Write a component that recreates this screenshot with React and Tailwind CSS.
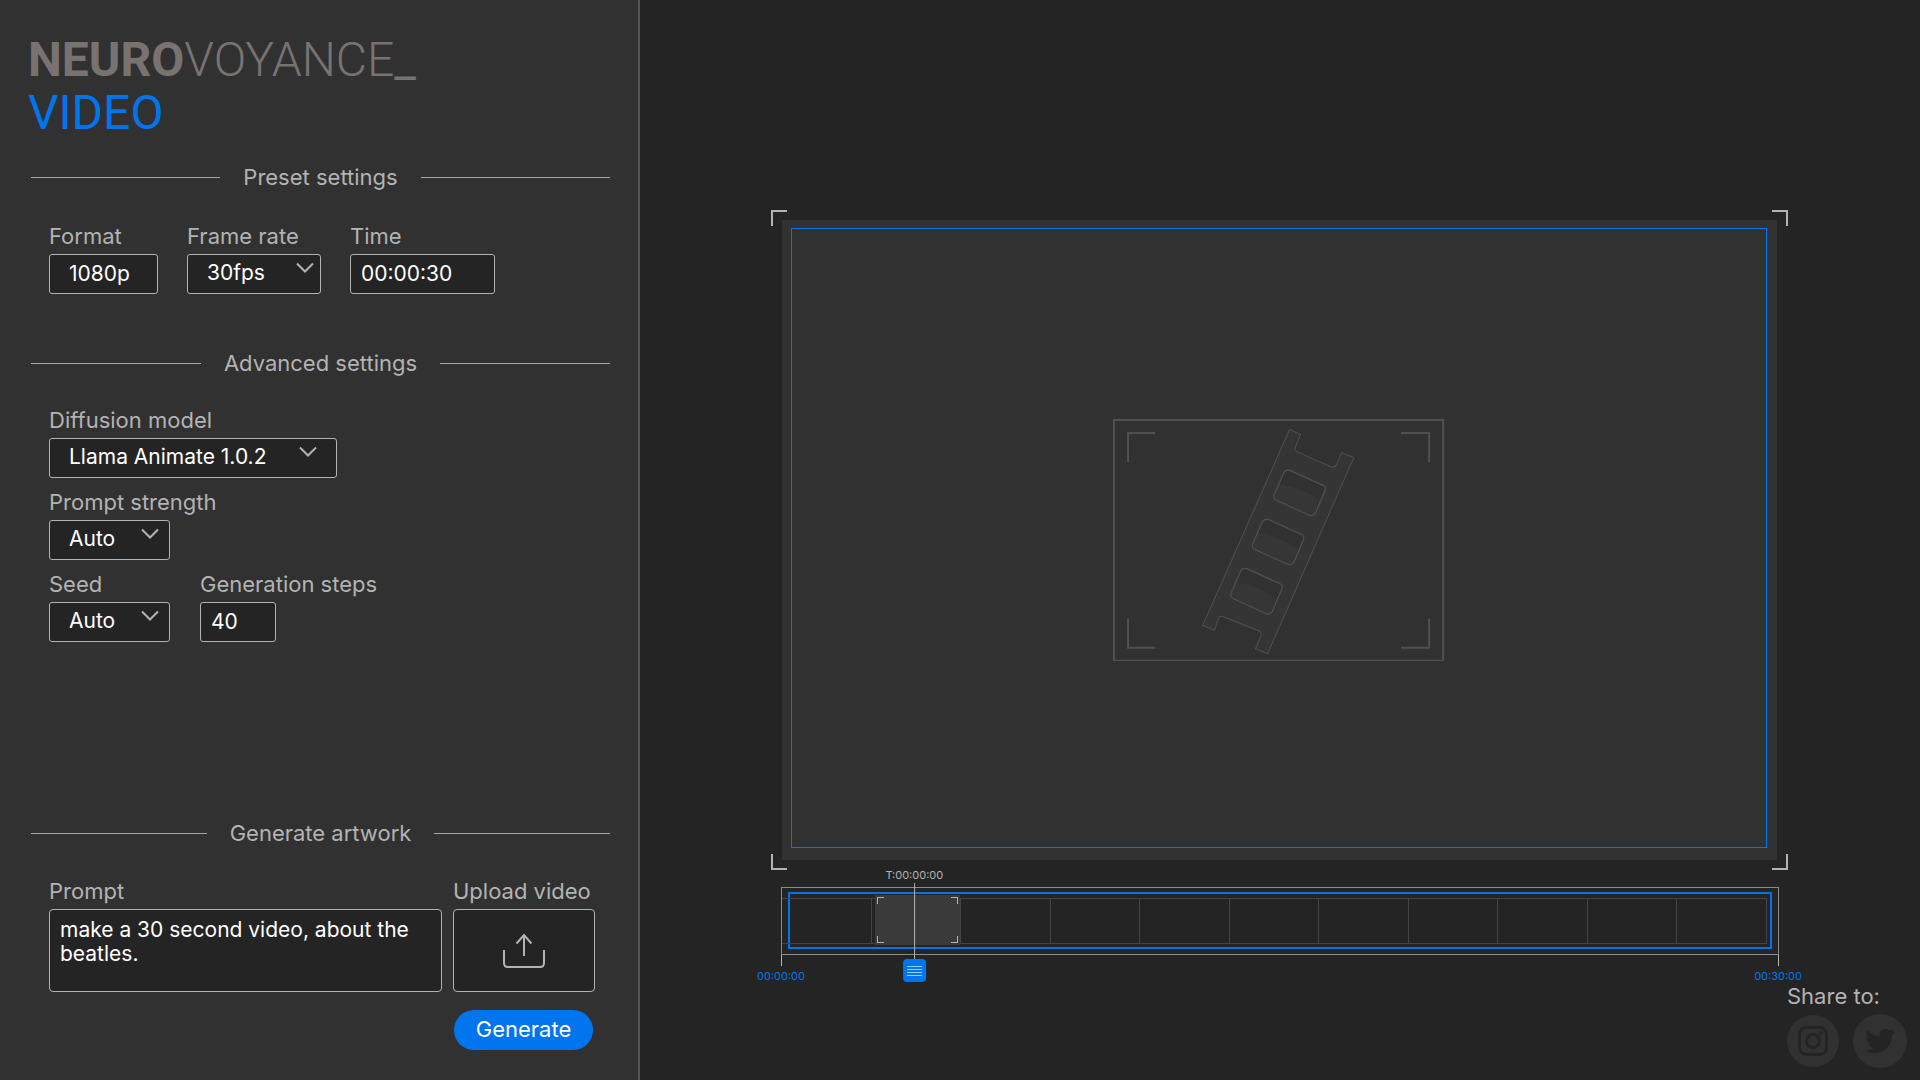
import { useState } from "react";

const boxClass = "h-10 rounded-[3px] border border-[#b3b3b3] bg-[#242424] pb-0.5 text-[21px] text-white outline-none";

function Divider({ children }) {
  return (
    <div className="flex items-center gap-[23px] pr-7 pl-[31px]">
      <span className="h-px flex-1 bg-[#a6a6a6]" />
      <h2 className="text-[22px] leading-6 text-[#b3b3b3]">{children}</h2>
      <span className="h-px flex-1 bg-[#a6a6a6]" />
    </div>
  );
}

function Field({ label, id, children }) {
  return (
    <div className="flex flex-col gap-1.5">
      <label htmlFor={id} className="text-[22px] leading-6 whitespace-nowrap text-[#b3b3b3]">{label}</label>
      {children}
    </div>
  );
}

function Select({ id, options, width, chevron = "right-[11px]" }) {
  return (
    <div className={"relative " + width}>
      <select id={id} className={"w-full appearance-none pl-[19px] " + boxClass}>
        {options.map((o) => <option key={o}>{o}</option>)}
      </select>
      <svg className={"pointer-events-none absolute top-2 h-3 w-[18px] " + chevron} viewBox="0 0 18 12" fill="none" stroke="#b3b3b3" strokeWidth="2">
        <path d="M1 1.5l8 8 8-8" />
      </svg>
    </div>
  );
}

function Corners({ size, thickness = "border-2", color }) {
  const base = "pointer-events-none absolute " + size + " " + color;
  const t = thickness === "border-2";
  return (
    <>
      <span className={base + " top-0 left-0 " + (t ? "border-t-2 border-l-2" : "border-t border-l")} />
      <span className={base + " top-0 right-0 " + (t ? "border-t-2 border-r-2" : "border-t border-r")} />
      <span className={base + " bottom-0 left-0 " + (t ? "border-b-2 border-l-2" : "border-b border-l")} />
      <span className={base + " right-0 bottom-0 " + (t ? "border-r-2 border-b-2" : "border-r border-b")} />
    </>
  );
}

function FilmPlaceholder() {
  return (
    <svg className="w-[34%]" viewBox="0 0 330 242" fill="none" stroke="#505050">
      <rect x="1" y="1" width="328" height="240" strokeWidth="2" />
      <g strokeWidth="2">
        <path d="M15 43V14H42M287 14H315V43M15 199V228H42M287 228H315V199" />
      </g>
      <path
        d="M176 10.500L187 15.500L182 27Q180 31 184 33L217 47.500Q221 49 223 45L228 33.500L240 38.500L154 234L142 229L147 217Q149 213 145 211L111 197.500Q107 195 105 199L101 210.500L89.500 205.500Z"
        fill="#353535"
      />
      {[[0, 0], [-21.500, 49], [-43, 98]].map(([x, y]) => (
        <g key={y} transform={`translate(${x} ${y})`}>
          <path d="M176 51L209 66Q213 68 211 72L202 93Q200 97 196 96L163 81Q159 79 161 75L170 54Q172 50 176 51Z" fill="#313131" />
          <path d="M166 65Q187 67 206 81L201 93Q199 97 196 96L163 81Q159 79 161 75Z" fill="#363636" stroke="none" />
          <path d="M176 51L209 66Q213 68 211 72L202 93Q200 97 196 96L163 81Q159 79 161 75L170 54Q172 50 176 51Z" />
        </g>
      ))}
    </svg>
  );
}

function Timeline() {
  return (
    <section aria-label="Timeline" className="relative mt-[27px]">
      <div className="-mr-0.5 -ml-px h-[68px] border border-[#8c8c8c] px-1.5 pt-1 pb-[5px]">
        <div className="h-full border-2 border-[#0075ed]" />
      </div>
      <div className="absolute top-[11px] right-2.5 left-0 grid h-[46px] grid-cols-11 border-y border-[#444]">
        {Array.from({ length: 11 }, (_, i) => <span key={i} className="border-r border-[#444]" />)}
      </div>
      <div className="absolute top-2 left-[9.3%] h-[50px] w-[8.6%] bg-[#3a3a3a] p-0.5">
        <div className="relative h-full">
          <Corners size="size-[7px]" thickness="border" color="border-[#b3b3b3]" />
        </div>
      </div>
      <div className="-mr-0.5 -ml-px flex h-[11px] justify-between">
        <span className="w-px bg-[#b3b3b3]" />
        <span className="w-px bg-[#b3b3b3]" />
      </div>
      <div className="mt-0.5 -mr-[25px] -ml-[25px] flex justify-between text-[11px] leading-4 text-[#0075ed]">
        <span>00:00:00</span>
        <span>00:30:00</span>
      </div>
      <div className="absolute -top-5 left-[13.3%] flex -translate-x-1/2 flex-col items-center">
        <span className="text-[11px] leading-4 text-[#b3b3b3]">T:00:00:00</span>
        <span className="h-[76px] w-px bg-[#b3b3b3]" />
        <button aria-label="Playhead" className="flex h-[23px] w-[23px] flex-col items-center justify-center gap-0.5 rounded-sm bg-[#0075ed]">
          <span className="h-px w-[15px] bg-[#9fcbf8]" />
          <span className="h-px w-[15px] bg-[#9fcbf8]" />
          <span className="h-px w-[15px] bg-[#9fcbf8]" />
          <span className="h-px w-[15px] bg-[#9fcbf8]" />
        </button>
      </div>
    </section>
  );
}

export default function App() {
  const [prompt, setPrompt] = useState("make a 30 second video, about the beatles.");
  return (
    <div className="flex min-h-screen bg-[#242424] font-['Inter',sans-serif]">
      <aside className="flex w-1/3 flex-col border-r-2 border-[#555] bg-[#313131]">
        <h1 className="px-7 pt-[33px] font-['Roboto',sans-serif] text-5xl leading-[53px] font-light text-[#787371]">
          <span className="font-bold">NEURO</span>VOYANCE<span className="font-normal">_</span>
          <span className="block font-normal text-[#0075ed]">VIDEO</span>
        </h1>
        <div className="mt-[26px]"><Divider>Preset settings</Divider></div>
        <div className="mt-[35px] flex gap-[29px] px-[49px]">
          <Field label="Format" id="format">
            <input id="format" defaultValue="1080p" className={"w-[109px] pl-[19px] " + boxClass} />
          </Field>
          <Field label="Frame rate" id="rate">
            <Select id="rate" options={["30fps", "24fps", "60fps"]} width="w-[134px]" chevron="right-[7px]" />
          </Field>
          <Field label="Time" id="time">
            <input id="time" defaultValue="00:00:30" className={"w-[145px] pl-2.5 " + boxClass} />
          </Field>
        </div>
        <div className="mt-[57px]"><Divider>Advanced settings</Divider></div>
        <div className="mt-[33px] flex flex-col gap-3 px-[49px]">
          <Field label="Diffusion model" id="model">
            <Select id="model" options={["Llama Animate 1.0.2"]} width="w-[288px]" chevron="right-5" />
          </Field>
          <Field label="Prompt strength" id="strength">
            <Select id="strength" options={["Auto", "Low", "High"]} width="w-[121px]" />
          </Field>
          <div className="flex gap-[30px]">
            <Field label="Seed" id="seed">
              <Select id="seed" options={["Auto", "Random"]} width="w-[121px]" />
            </Field>
            <Field label="Generation steps" id="steps">
              <input id="steps" defaultValue="40" className={"w-[76px] pl-2.5 " + boxClass} />
            </Field>
          </div>
        </div>
        <div className="mt-auto pt-10"><Divider>Generate artwork</Divider></div>
        <div className="mt-[34px] flex gap-[11px] pr-[43px] pl-[49px]">
          <div className="flex flex-1 flex-col gap-1.5">
            <label htmlFor="prompt" className="text-[22px] leading-6 text-[#b3b3b3]">Prompt</label>
            <textarea
              id="prompt"
              value={prompt}
              onChange={(e) => setPrompt(e.target.value)}
              className="h-[83px] resize-none rounded-[4px] border border-[#b3b3b3] bg-[#242424] px-2.5 py-2 text-[21px] leading-6 text-white outline-none"
            />
          </div>
          <Field label="Upload video" id="upload">
            <button id="upload" className="flex h-[83px] w-[142px] items-center justify-center rounded-[4px] border border-[#b3b3b3] bg-[#242424]">
              <svg className="h-9 w-11" viewBox="0 0 44 36" fill="none" stroke="#b3b3b3" strokeWidth="2">
                <path d="M22 23V2M14.500 10.500L22 2l7.500 8.500M2 17v13q0 4 4 4h32q4 0 4-4V17" />
              </svg>
            </button>
          </Field>
        </div>
        <div className="mt-[18px] mb-[31px] flex justify-end pr-[45px]">
          <button className="h-10 w-[139px] rounded-full bg-[#0075ed] pb-0.5 text-[22px] text-white">Generate</button>
        </div>
      </aside>
      <main className="flex flex-1 flex-col">
        <div className="pt-[220px] pr-[143px] pl-[142px]">
          <section aria-label="Preview" className="relative bg-[#313131] pt-2 pr-2.5 pb-3 pl-[9px]">
            <div className="flex aspect-[976/620] items-center justify-center border border-[#0075ed] pt-1">
              <FilmPlaceholder />
            </div>
            <div className="pointer-events-none absolute -inset-x-[11px] -inset-y-2.5">
              <Corners size="size-4" color="border-[#b3b3b3]" />
            </div>
          </section>
          <Timeline />
        </div>
        <div className="mt-auto flex flex-col self-end pr-[13px] pb-[13px]">
          <p className="text-[22px] leading-6 text-[#b3b3b3]">Share to:</p>
          <div className="mt-1.5 flex items-center gap-3.5">
            <a href="#instagram" aria-label="Instagram" className="flex size-[52px] items-center justify-center rounded-full bg-[#313131]">
              <svg className="size-8" viewBox="0 0 32 32" fill="none" stroke="#242424" strokeWidth="3">
                <rect x="2.500" y="2.500" width="27" height="27" rx="7" />
                <circle cx="16" cy="16" r="6.500" />
                <circle cx="24" cy="8" r="1.800" fill="#242424" stroke="none" />
              </svg>
            </a>
            <a href="#twitter" aria-label="Twitter" className="flex size-[54px] items-center justify-center rounded-full bg-[#313131]">
              <svg className="size-[30px]" viewBox="0 0 24 24" fill="#242424">
                <path d="M23.953 4.570a10 10 0 01-2.825.775 4.958 4.958 0 002.163-2.723c-.951.555-2.005.959-3.127 1.184a4.920 4.920 0 00-8.384 4.482C7.690 8.095 4.067 6.130 1.640 3.162a4.822 4.822 0 00-.666 2.475c0 1.710.870 3.213 2.188 4.096a4.904 4.904 0 01-2.228-.616v.060a4.923 4.923 0 003.946 4.827 4.996 4.996 0 01-2.212.085 4.936 4.936 0 004.604 3.417 9.867 9.867 0 01-6.102 2.105c-.390 0-.779-.023-1.170-.067a13.995 13.995 0 007.557 2.209c9.053 0 13.998-7.496 13.998-13.985 0-.210 0-.420-.015-.630A9.935 9.935 0 0024 4.590z" />
              </svg>
            </a>
          </div>
        </div>
      </main>
    </div>
  );
}
